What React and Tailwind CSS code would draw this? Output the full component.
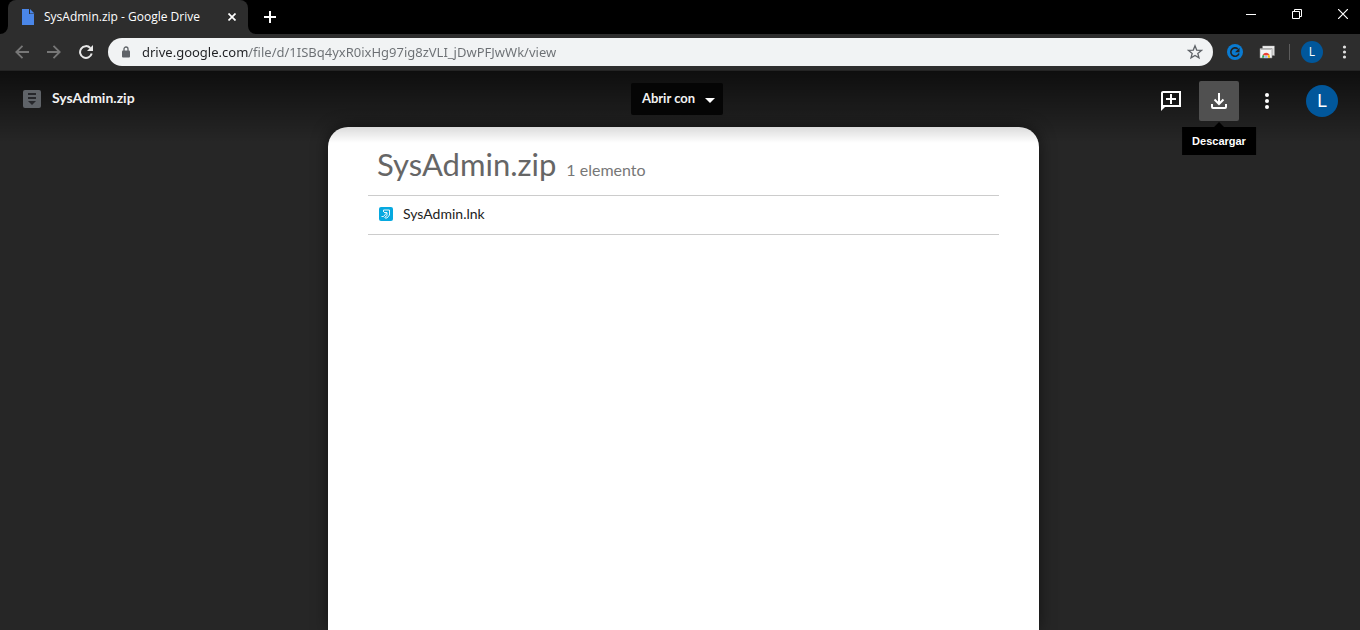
import React, { useState } from 'react';

const TabStrip = () => {
    return (
        <div className="flex h-[34px] items-stretch justify-between bg-black pl-2 text-white">
            <div className="flex items-center">
                <div className="relative flex h-full w-60 items-center rounded-t-lg bg-[#2d2d2d] pl-3 pr-2">
                    <svg className="absolute -left-2 bottom-0 size-2" viewBox="0 0 8 8">
                        <path d="M8 0v8H0a8 8 0 0 0 8-8z" fill="#2d2d2d" />
                    </svg>
                    <svg className="absolute -right-2 bottom-0 size-2" viewBox="0 0 8 8">
                        <path d="M0 0v8h8a8 8 0 0 1-8-8z" fill="#2d2d2d" />
                    </svg>
                    <svg className="size-4 shrink-0" viewBox="0 0 16 16">
                        <path d="M2 0h7v5h5v11H2z" fill="#4a86e8" />
                        <path d="M10 0l4.500 4.500H10z" fill="#4a86e8" />
                    </svg>
                    <span className="ml-2 flex-1 truncate font-['Open_Sans','Noto_Sans',sans-serif] text-xs">
                        SysAdmin.zip - Google Drive
                    </span>
                    <button type="button" aria-label="Cerrar pestaña" className="flex size-4 items-center justify-center">
                        <svg className="size-2" viewBox="0 0 8 8" stroke="#fff" strokeWidth="1.700">
                            <path d="M.5.5l7 7M7.500.5l-7 7" />
                        </svg>
                    </button>
                </div>
                <button type="button" aria-label="Nueva pestaña" className="ml-2 flex size-7 items-center justify-center">
                    <svg className="size-3" viewBox="0 0 12 12" stroke="#fff" strokeWidth="2">
                        <path d="M6 0v12M0 6h12" />
                    </svg>
                </button>
            </div>
            <div className="flex h-7 items-center">
                <button type="button" aria-label="Minimizar" className="flex h-7 w-[46px] items-center justify-center">
                    <svg className="size-2.5" viewBox="0 0 10 10">
                        <path d="M0 5h10v1H0z" fill="#fff" />
                    </svg>
                </button>
                <button type="button" aria-label="Restaurar" className="flex h-7 w-[46px] items-center justify-center">
                    <svg className="size-2.5" viewBox="0 0 10 10" fill="none" stroke="#fff">
                        <path d="M.5 2.500h7v7h-7zM2.500 2.500v-2h7v7h-2" />
                    </svg>
                </button>
                <button type="button" aria-label="Cerrar" className="flex h-7 w-10 items-center justify-center pl-1.5">
                    <svg className="size-2.5" viewBox="0 0 10 10" stroke="#fff" strokeWidth="1.200">
                        <path d="M0 0l10 10M10 0L0 10" />
                    </svg>
                </button>
            </div>
        </div>
    );
};

const Toolbar = () => {
    const [url, setUrl] = useState('drive.google.com/file/d/1ISBq4yxR0ixHg97ig8zVLI_jDwPFJwWk/view');

    return (
        <div className="flex h-[37px] items-center border-b border-[#242424] bg-[#2d2d2d] pl-2">
            <button type="button" aria-label="Atrás" className="flex size-7 items-center justify-center">
                <svg className="size-3.5" viewBox="0 0 14 14" fill="none" stroke="#777" strokeWidth="1.800">
                    <path d="M14 7H1.500M7.500.8L1.300 7l6.200 6.200" />
                </svg>
            </button>
            <button type="button" aria-label="Adelante" className="ml-1 flex size-7 items-center justify-center">
                <svg className="size-3.5" viewBox="0 0 14 14" fill="none" stroke="#777" strokeWidth="1.800">
                    <path d="M0 7h12.500M6.500.8L12.700 7l-6.200 6.200" />
                </svg>
            </button>
            <button type="button" aria-label="Volver a cargar" className="ml-1 flex size-7 items-center justify-center">
                <svg className="size-3.5" viewBox="0 0 14 14">
                    <path d="M12.700 8.500A5.900 5.900 0 1 1 11.300 3" fill="none" stroke="#e8e8e8" strokeWidth="2" />
                    <path d="M14 0v6H8z" fill="#e8e8e8" />
                </svg>
            </button>
            <div className="ml-2 flex h-7 flex-1 items-center rounded-full bg-[#f1f3f4] pl-3 pr-2.5">
                <svg className="h-3 w-3 shrink-0" viewBox="0 0 12 12">
                    <path d="M4 5V3a2 2 0 0 1 4 0v2" fill="none" stroke="#5f6368" strokeWidth="1.300" />
                    <rect x="2" y="4.500" width="8" height="7" rx="1" fill="#5f6368" />
                </svg>
                {/* host name is darker than the path after it */}
                <input
                    type="text"
                    aria-label="Dirección"
                    value={url}
                    onChange={(e) => setUrl(e.target.value)}
                    className="ml-2.5 h-5 flex-1 bg-[linear-gradient(90deg,#202124_107px,#6b6f73_107px)] bg-clip-text font-['Noto_Sans','Open_Sans',sans-serif] text-[13px] text-transparent caret-black outline-none"
                />
                <button type="button" aria-label="Añadir a marcadores" className="flex size-4 items-center justify-center">
                    <svg className="size-4" viewBox="0 0 16 16" fill="none" stroke="#5f6368" strokeWidth="1.300">
                        <path d="M8 1.800l1.700 4.300 4.700.3-3.600 3 1.200 4.500L8 11.400l-4 2.500 1.200-4.500-3.600-3 4.700-.3z" />
                    </svg>
                </button>
            </div>
            <button type="button" aria-label="Extensión" className="ml-3.5 flex size-4 items-center justify-center">
                <svg className="size-4" viewBox="0 0 16 16">
                    <circle cx="8" cy="8" r="8" fill="#0a7bd1" />
                    <path d="M12 9.500A4.200 4.200 0 1 1 10.800 4.900" fill="none" stroke="#222" strokeWidth="1.600" />
                    <path d="M12.500 3.800v4.400H8z" fill="#222" />
                </svg>
            </button>
            <button type="button" aria-label="Capturas" className="ml-4 flex size-4 items-center justify-center">
                <svg className="size-4" viewBox="0 0 16 16">
                    <path d="M3.500 2h12v9.500h-12z" fill="#ddd" stroke="#888" strokeWidth=".6" />
                    <path d="M4 3h11" stroke="#fff" />
                    <path d="M1 4.500h12V14H1z" fill="#f4f4f4" stroke="#888" strokeWidth=".6" />
                    <path d="M1.500 5.500h11" stroke="#bbb" />
                    <path d="M3 13.700q0-2 1-3.200L5.500 12v1.700z" fill="#34a853" />
                    <path d="M3.700 10.700a4 4 0 0 1 6.800 0L7 11.700z" fill="#ea4335" />
                    <path d="M10.300 10.500q.8 1.300.7 3.200H8.500v-2z" fill="#fbbc05" />
                    <path d="M5.300 13.700a1.750 1.750 0 0 1 3.500 0z" fill="#4285f4" stroke="#fff" strokeWidth=".5" />
                </svg>
            </button>
            <div className="ml-3.5 h-4 w-px bg-[#5c5c5c]" />
            <button
                type="button"
                aria-label="Perfil"
                className="ml-[11px] flex size-[22px] items-center justify-center rounded-full bg-[#01579b] font-['Open_Sans','Noto_Sans',sans-serif] text-xs text-white"
            >
                L
            </button>
            <button type="button" aria-label="Menú" className="ml-2 mr-px flex h-7 w-7 items-center justify-center">
                <svg className="size-4" viewBox="0 0 16 16" fill="#e0e0e0">
                    <circle cx="7.500" cy="3" r="1.600" />
                    <circle cx="7.500" cy="8" r="1.600" />
                    <circle cx="7.500" cy="13" r="1.600" />
                </svg>
            </button>
        </div>
    );
};

const ViewerHeader = () => {
    return (
        <header className="relative h-14 text-white">
            {/* shade falls a little below the bar, over the top of the page */}
            <div className="pointer-events-none absolute inset-x-0 top-0 z-10 h-[72px] bg-linear-to-b from-black/63 to-transparent" />
            <div className="relative z-20 grid grid-cols-[1fr_auto_1fr] items-start pl-4 pr-[22px] pt-2.5">
                <div className="flex h-9 items-center pl-[7px]">
                    <svg className="size-[18px]" viewBox="0 0 18 18">
                        <rect width="18" height="18" rx="2" fill="#5f6368" />
                        <path d="M5 3h8v2H5zM5 7h8v2H5zM5 11h8l-4 4z" fill="#26272b" />
                    </svg>
                    <h1 className="ml-[11px] pb-0.5 text-sm font-bold text-[#f1f1f1]">SysAdmin.zip</h1>
                </div>
                <button type="button" className="mt-0.5 flex h-8 items-center rounded-xs bg-[#050505] pl-[11px] pr-2 text-[13px] font-bold text-[#f1f1f1]">
                    Abrir con
                    <svg className="ml-2.5 mt-0.5 h-[5px] w-2.5" viewBox="0 0 10 5">
                        <path d="M0 0h10L5 5z" fill="#fff" />
                    </svg>
                </button>
                <div className="flex items-center justify-end">
                    <button type="button" aria-label="Añadir un comentario" className="flex size-10 items-center justify-center">
                        <svg className="size-6" viewBox="0 0 24 24" fill="#fff">
                            <path d="M22 2H4c-1.100 0-1.990.9-1.990 2L2 22l4-4h16V2zm-2 14H4V4h16v12z" />
                            <path d="M11 5h2v4h4v2h-4v4h-2v-4H7V9h4z" />
                        </svg>
                    </button>
                    <div className="relative ml-2">
                        <button
                            type="button"
                            aria-describedby="download-tip"
                            aria-label="Descargar"
                            className="flex size-10 items-center justify-center rounded-xs bg-[#505050]"
                        >
                            <svg className="size-6" viewBox="0 0 24 24" fill="none" stroke="#fff" strokeWidth="2">
                                <path d="M12 4v11M7.500 10.500L12 15l4.500-4.500M5 15v3q0 1 1 1h12q1 0 1-1v-3" />
                            </svg>
                        </button>
                        <div
                            id="download-tip"
                            role="tooltip"
                            className="absolute left-1/2 top-[46px] flex h-7 -translate-x-1/2 items-center bg-black px-2.5 font-['Liberation_Sans',Arial,sans-serif] text-[11px] font-bold"
                        >
                            <svg className="absolute -top-[5px] left-1/2 h-[5px] w-2.5 -translate-x-1/2" viewBox="0 0 10 5">
                                <path d="M0 5l5-5 5 5z" />
                            </svg>
                            Descargar
                        </div>
                    </div>
                    <button type="button" aria-label="Más acciones" className="ml-2 flex size-10 items-center justify-center">
                        <svg className="size-6" viewBox="0 0 24 24" fill="#fff">
                            <circle cx="12" cy="6" r="2" />
                            <circle cx="12" cy="12" r="2" />
                            <circle cx="12" cy="18" r="2" />
                        </svg>
                    </button>
                    <button
                        type="button"
                        aria-label="Cuenta"
                        className="ml-[19px] flex size-8 items-center justify-center rounded-full bg-[#01579b] font-[Roboto,sans-serif] text-lg"
                    >
                        L
                    </button>
                </div>
            </div>
        </header>
    );
};

const files = [{ name: 'SysAdmin.lnk' }];

const ZipContents = () => {
    return (
        <main className="flex flex-1 pl-[7px]">
            <section className="mx-auto w-full max-w-[711px] rounded-t-[20px] bg-white px-10 shadow-[0_0_16px_rgba(0,0,0,0.5)]">
                <div className="flex h-[69px] items-baseline border-b border-[#ccc] pl-[9px] pt-4 text-[#666]">
                    <h2 className="text-[31px] leading-[42px]">SysAdmin.zip</h2>
                    <span className="ml-2.5 text-base text-[#777]">{files.length} elemento</span>
                </div>
                <ul>
                    {files.map((file) => (
                        <li key={file.name} className="flex h-[39px] items-center border-b border-[#ccc] pb-0.5 pl-[11px]">
                            <svg className="size-3.5" viewBox="0 0 14 14">
                                <rect width="14" height="14" rx="2" fill="#06a9e0" />
                                <path d="M4.500 5V3h6v5L8 11H6M2.500 9.500h2l3-3.500M5 5.500h3v3L5.500 10.500" fill="none" stroke="#fff" strokeWidth=".9" />
                            </svg>
                            <span className="ml-2.5 text-sm text-[#222]">{file.name}</span>
                        </li>
                    ))}
                </ul>
            </section>
        </main>
    );
};

const App = () => {
    return (
        <div className="flex min-h-screen flex-col bg-[#262626] font-[Lato,'Open_Sans',sans-serif]">
            <TabStrip />
            <Toolbar />
            <ViewerHeader />
            <ZipContents />
        </div>
    );
};

export default App;
